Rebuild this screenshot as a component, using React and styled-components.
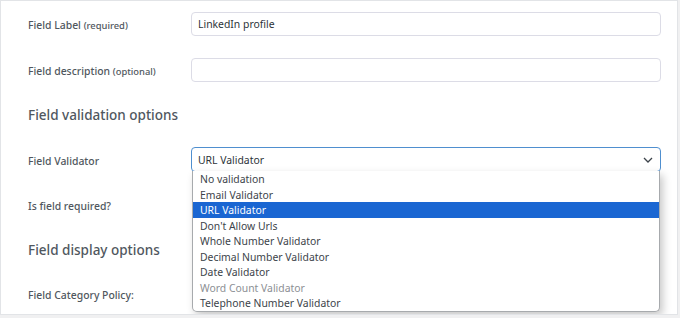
import React from 'react';
import styled, { createGlobalStyle } from 'styled-components';

const GlobalStyle = createGlobalStyle`
  html, body {
    margin: 0;
    padding: 0;
    background: #f0f0f1;
  }
  body {
    font-family: "Noto Sans", "Open Sans", sans-serif;
  }
`;

const Panel = styled.div`
  box-sizing: border-box;
  width: 678px;
  height: 315px;
  background: #fff;
  border: 1px solid #e2e4e7;
  padding: 11px 0 0 27px;
  display: flex;
  flex-direction: column;
  overflow: hidden;
`;

const Row = styled.div`
  display: grid;
  grid-template-columns: 163px 470px;
  align-items: center;
  height: ${p => p.h || 24}px;
  margin-top: ${p => p.mt || 0}px;
`;

const Label = styled.div`
  padding-top: 2px;
  font-size: 10.4px;
  font-weight: 500;
  color: #50575e;
  white-space: nowrap;
`;

const Hint = styled.span`
  font-size: 9.4px;
`;

const Heading = styled.h2`
  margin: ${p => p.mt}px 0 0 0;
  height: 22px;
  line-height: 22px;
  font-size: 13.5px;
  font-weight: 500;
  color: #50575e;
`;

const Input = styled.div`
  box-sizing: border-box;
  height: 24px;
  border: 1px solid #dcdce6;
  border-radius: 4px;
  padding: 0 6px;
  display: flex;
  align-items: center;
  font-size: 10.4px;
  color: #2c3338;
`;

const SelectWrap = styled.div`
  position: relative;
  height: 25px;
`;

const Select = styled.div`
  box-sizing: border-box;
  height: 25px;
  border: 1px solid #4f8fcf;
  border-radius: 4px;
  padding: 0 6px 0 6px;
  display: flex;
  align-items: center;
  justify-content: space-between;
  font-size: 10.4px;
  color: #2c3338;
`;

const List = styled.ul`
  position: absolute;
  top: 24px;
  left: 1px;
  width: 468px;
  box-sizing: border-box;
  margin: 0;
  padding: 0;
  list-style: none;
  background: #fff;
  border: 1px solid #a7aaad;
  border-top: none;
  border-radius: 0 0 5px 5px;
  box-shadow: 3px 4px 8px rgba(0, 0, 0, 0.22);
  z-index: 5;
`;

const Option = styled.li`
  box-sizing: border-box;
  height: 15.5px;
  line-height: 15.5px;
  padding: 1px 0 0 7px;
  font-size: 10.4px;
  color: ${p => (p.selected ? '#fff' : p.disabled ? '#8c8f94' : '#3c434a')};
  background: ${p => (p.selected ? '#1a66d2' : 'transparent')};
  white-space: nowrap;
  overflow: hidden;
`;

const options = [
  'No validation',
  'Email Validator',
  'URL Validator',
  "Don't Allow Urls",
  'Whole Number Validator',
  'Decimal Number Validator',
  'Date Validator',
  'Word Count Validator',
  'Telephone Number Validator',
];

function Chevron() {
  return (
    <svg width="12" height="6" viewBox="0 0 12 6">
      <polyline points="2,1 6,5 10,1" fill="none" stroke="#3c434a" strokeWidth="1.3" />
    </svg>
  );
}

export default function App() {
  return (
    <>
      <GlobalStyle />
      <Panel>
        <Row>
          <Label>
            Field Label <Hint>(required)</Hint>
          </Label>
          <Input>LinkedIn profile</Input>
        </Row>
        <Row mt={22}>
          <Label>
            Field description <Hint>(optional)</Hint>
          </Label>
          <Input />
        </Row>
        <Heading mt={22}>Field validation options</Heading>
        <Row mt={21} h={25}>
          <Label>Field Validator</Label>
          <SelectWrap>
            <Select>
              URL Validator
              <Chevron />
            </Select>
            <List>
              {options.map(o => (
                <Option
                  key={o}
                  selected={o === 'URL Validator'}
                  disabled={o === 'Word Count Validator'}
                >
                  {o}
                </Option>
              ))}
            </List>
          </SelectWrap>
        </Row>
        <Row mt={21}>
          <Label>Is field required?</Label>
          <div />
        </Row>
        <Heading mt={22}>Field display options</Heading>
        <Row mt={21}>
          <Label>Field Category Policy:</Label>
          <div />
        </Row>
      </Panel>
    </>
  );
}
